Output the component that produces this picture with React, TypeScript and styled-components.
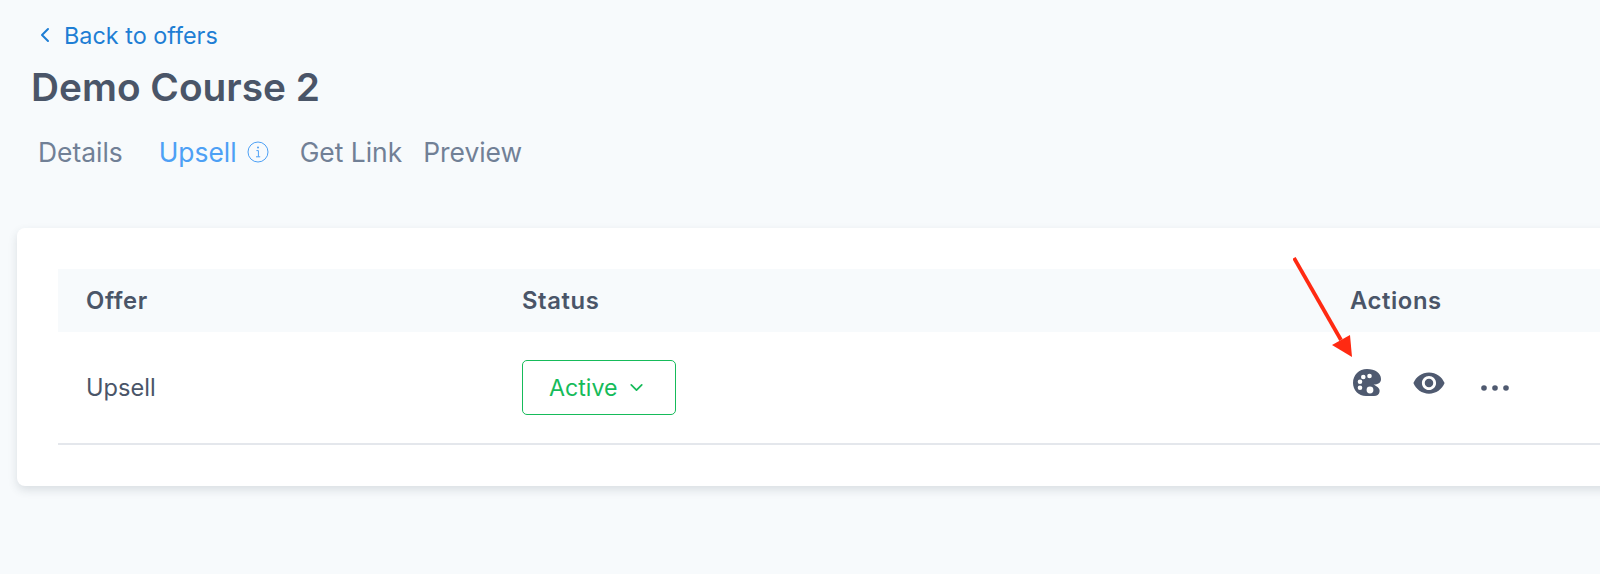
import React from "react";
import styled, { createGlobalStyle } from "styled-components";
import { MdVisibility } from "react-icons/md";
import { FiChevronDown, FiChevronLeft } from "react-icons/fi";

const GlobalStyle = createGlobalStyle`
  html, body {
    margin: 0;
    padding: 0;
    height: 100%;
    overflow: hidden;
    background: #f7fafc;
    font-family: Inter, "Liberation Sans", sans-serif;
    color: #4a5568;
  }
`;

export default function App() {
  return (
    <Page>
      <GlobalStyle />
      <Header>
        <BackLink>
          <FiChevronLeft size={24} />
          <span>Back to offers</span>
        </BackLink>
        <Title>Demo Course 2</Title>
        <Tabs>
          <Tab>Details</Tab>
          <Tab $active>
            Upsell
            <InfoIcon viewBox="0 0 22 22">
              <circle cx="11" cy="11" r="10" fill="none" stroke="currentColor" strokeWidth="1" />
              <circle cx="11" cy="6.6" r="1" fill="currentColor" />
              <path d="M9.4 9.6h2v6M9 15.8h4.2" fill="none" stroke="currentColor" strokeWidth="1" />
            </InfoIcon>
          </Tab>
          <Tab>Get Link</Tab>
          <Tab>Preview</Tab>
        </Tabs>
      </Header>

      <Card>
        <Table>
          <HeadRow>
            <OfferCell>Offer</OfferCell>
            <StatusCell>Status</StatusCell>
            <ActionsCell>Actions</ActionsCell>
          </HeadRow>
          <BodyRow>
            <OfferCell>Upsell</OfferCell>
            <StatusCell>
              <StatusButton>
                Active
                <FiChevronDown size={21} />
              </StatusButton>
            </StatusCell>
            <ActionsCell>
              <Actions>
                <PaletteIcon viewBox="0 0 29 27">
                  <path
                    fillRule="evenodd"
                    d="M14 0C22 0 28 4 28 10C28 14 25 15.5 20.5 15.5C23 17 27.5 19 26.5 23C26 25.5 24 27 21 27H13C5.5 27 0 21 0 14C0 6 6 0 14 0ZM10.3 5.7a2.3 2.3 0 1 0 0 4.6a2.3 2.3 0 1 0 0-4.6ZM16.5 4.7a2.3 2.3 0 1 0 0 4.6a2.3 2.3 0 1 0 0-4.6ZM7 10.4a2.3 2.3 0 1 0 0 4.6a2.3 2.3 0 1 0 0-4.6ZM7 16.4a2.3 2.3 0 1 0 0 4.6a2.3 2.3 0 1 0 0-4.6ZM17 17.6a3.4 3.4 0 1 0 0 6.8a3.4 3.4 0 1 0 0-6.8Z"
                  />
                </PaletteIcon>
                <EyeIcon size={34} />
                <DotsIcon viewBox="0 0 28 6">
                  <circle cx="3" cy="3" r="2.8" />
                  <circle cx="14" cy="3" r="2.8" />
                  <circle cx="25" cy="3" r="2.8" />
                </DotsIcon>
              </Actions>
            </ActionsCell>
          </BodyRow>
        </Table>
        <Arrow viewBox="0 0 64 104">
          <path d="M1 1L48 83" fill="none" stroke="#ff2a12" strokeWidth="3.8" />
          <path d="M59 100L39 88L57 78Z" fill="#ff2a12" />
        </Arrow>
      </Card>
    </Page>
  );
}

const Page = styled.div`
  width: 1600px;
  height: 574px;
  overflow: hidden;
  background: #f7fafc;
`;

const Header = styled.header`
  display: flex;
  flex-direction: column;
  align-items: flex-start;
  padding: 21px 0 0 32px;
`;

const BackLink = styled.a`
  display: flex;
  align-items: center;
  gap: 7px;
  height: 28px;
  margin-left: 1px;
  font-size: 23.4px;
  color: #1e7ed4;
`;

const Title = styled.h1`
  margin: 15px 0 0 -1px;
  font-size: 38.8px;
  line-height: 46px;
  font-weight: 600;
  color: #4a5568;
`;

const Tabs = styled.nav`
  display: flex;
  align-items: center;
  margin: 24px 0 0 6px;
`;

const Tab = styled.a<{ $active?: boolean }>`
  display: flex;
  align-items: center;
  gap: 10px;
  margin-right: ${(p) => (p.$active ? "31px" : "21px")};
  &:first-child {
    margin-right: 36px;
  }
  font-size: 26.4px;
  line-height: 36px;
  color: ${(p) => (p.$active ? "#4da0f5" : "#718096")};
`;

const InfoIcon = styled.svg`
  width: 22px;
  height: 22px;
`;

const Card = styled.section`
  position: relative;
  width: 1640px;
  height: 258px;
  margin: 58px 0 0 17px;
  padding: 41px 0 0 41px;
  box-sizing: border-box;
  background: #fff;
  border-radius: 8px;
  box-shadow: 0 4px 10px rgba(45, 55, 72, 0.14);
`;

const Table = styled.div`
  display: flex;
  flex-direction: column;
`;

const HeadRow = styled.div`
  display: grid;
  grid-template-columns: 436px 828px 1fr;
  align-items: center;
  height: 63px;
  padding-left: 28px;
  background: #f7fafc;
  font-size: 23.8px;
  letter-spacing: 0.6px;
  font-weight: 600;
`;

const BodyRow = styled.div`
  display: grid;
  grid-template-columns: 436px 828px 1fr;
  align-items: center;
  height: 111px;
  padding-left: 28px;
  border-bottom: 2px solid #e4e7ec;
  font-size: 23.6px;
`;

const OfferCell = styled.div``;

const StatusCell = styled.div``;

const ActionsCell = styled.div``;

const StatusButton = styled.button`
  display: flex;
  align-items: center;
  gap: 8px;
  width: 154px;
  height: 55px;
  padding: 0 0 0 26px;
  box-sizing: border-box;
  background: #fff;
  border: 1.5px solid #16bb5a;
  border-radius: 5px;
  color: #16bb5a;
  font-family: inherit;
  font-size: 23.2px;
`;

const Actions = styled.div`
  display: flex;
  align-items: center;
  gap: 29px;
  margin: 0 0 10px 3px;
  color: #4f5a70;
`;

const PaletteIcon = styled.svg`
  width: 29px;
  height: 27px;
  fill: currentColor;
`;

const EyeIcon = styled(MdVisibility)`
  margin-left: 1px;
`;

const DotsIcon = styled.svg`
  width: 28px;
  height: 6px;
  margin-left: 6px;
  margin-top: 10px;
  fill: currentColor;
`;

const Arrow = styled.svg`
  position: absolute;
  left: 1276px;
  top: 29px;
  width: 64px;
  height: 104px;
`;
